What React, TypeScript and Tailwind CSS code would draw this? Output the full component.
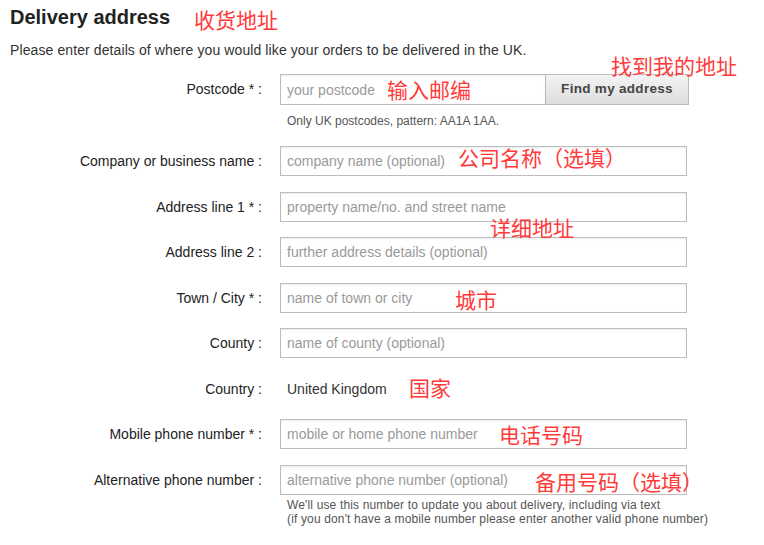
import React from 'react'

const font = { fontFamily: '"Liberation Sans", Arial, sans-serif' }

function Note({ text, className }: { text: string; className: string }) {
  return (
    <span
      className={`absolute text-[21px] leading-none text-[#ff3a3a] whitespace-nowrap ${className}`}
      style={{ fontFamily: '"Noto Sans CJK SC", sans-serif' }}
    >
      {text}
    </span>
  )
}

function Row({ label, placeholder, className = '' }: { label: string; placeholder: string; className?: string }) {
  return (
    <div className={`flex items-center h-[30px] ${className}`}>
      <label className="w-[262px] text-right text-[14px] text-[#222] shrink-0">{label}</label>
      <input
        placeholder={placeholder}
        className="ml-[18px] w-[407px] h-[30px] border border-[#bdbdbd] px-[6px] text-[14px] text-[#333] placeholder:text-[#9a9a9a] outline-none shadow-[inset_0_1px_2px_rgba(0,0,0,0.08)]"
      />
    </div>
  )
}

export default function App() {
  return (
    <div className="relative w-[764px] h-[545px] bg-white pl-[10px] pt-[5px] overflow-hidden" style={font}>
      <h1 className="text-[20px] leading-[24px] font-bold text-[#222]">Delivery address</h1>
      <p className="mt-[13px] text-[14px] leading-[16px] tracking-[0.1px] text-[#333]">
        Please enter details of where you would like your orders to be delivered in the UK.
      </p>

      <div className="mt-[16px] -ml-[10px]">
        {/* Postcode */}
        <div className="flex items-center h-[31px]">
          <label className="w-[262px] text-right text-[14px] text-[#222] shrink-0">Postcode * :</label>
          <input
            placeholder="your postcode"
            className="ml-[18px] w-[265px] h-[31px] border border-[#bdbdbd] border-r-0 px-[6px] text-[14px] placeholder:text-[#9a9a9a] outline-none shadow-[inset_0_1px_2px_rgba(0,0,0,0.08)]"
          />
          <button className="w-[144px] h-[31px] border border-[#bdbdbd] bg-gradient-to-b from-[#f4f4f4] to-[#dddddd] text-[13.5px] font-bold text-[#444] tracking-[0.3px]">
            Find my address
          </button>
        </div>
        <div className="ml-[287px] mt-[9px] text-[12px] leading-[14px] text-[#555]">
          Only UK postcodes, pattern: AA1A 1AA.
        </div>

        <Row className="mt-[18px]" label="Company or business name :" placeholder="company name (optional)" />
        <Row className="mt-[16px]" label="Address line 1 * :" placeholder="property name/no. and street name" />
        <Row className="mt-[15px]" label="Address line 2 :" placeholder="further address details (optional)" />
        <Row className="mt-[16px]" label="Town / City * :" placeholder="name of town or city" />
        <Row className="mt-[15px]" label="County :" placeholder="name of county (optional)" />

        <div className="flex items-center h-[30px] mt-[16px]">
          <span className="w-[262px] text-right text-[14px] text-[#222] shrink-0">Country :</span>
          <span className="ml-[25px] text-[14px] text-[#333]">United Kingdom</span>
        </div>

        <Row className="mt-[15px]" label="Mobile phone number * :" placeholder="mobile or home phone number" />
        <Row className="mt-[16px]" label="Alternative phone number :" placeholder="alternative phone number (optional)" />
        <div className="ml-[287px] mt-[3px] text-[12px] leading-[14px] tracking-[0.15px] text-[#555]">
          <div>We'll use this number to update you about delivery, including via text</div>
          <div>(if you don't have a mobile number please enter another valid phone number)</div>
        </div>
      </div>

      <Note text="收货地址" className="left-[194px] top-[9px]" />
      <Note text="找到我的地址" className="left-[611px] top-[55px]" />
      <Note text="输入邮编" className="left-[387px] top-[79px]" />
      <Note text="公司名称（选填）" className="left-[458px] top-[147px]" />
      <Note text="详细地址" className="left-[490px] top-[217px]" />
      <Note text="城市" className="left-[455px] top-[289px]" />
      <Note text="国家" className="left-[409px] top-[377px]" />
      <Note text="电话号码" className="left-[499px] top-[424px]" />
      <Note text="备用号码（选填）" className="left-[535px] top-[471px]" />
    </div>
  )
}
